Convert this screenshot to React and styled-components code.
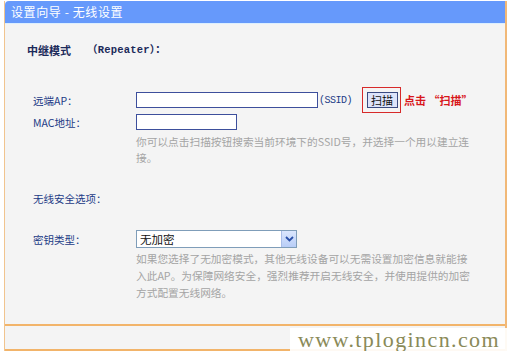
import React from 'react'
import styled, { createGlobalStyle } from 'styled-components'

const GlobalStyle = createGlobalStyle`
  body {
    margin: 0;
    background: #ffffff;
    font-family: "Noto Sans CJK SC", "Liberation Sans", sans-serif;
  }
`

const Page = styled.div`
  position: relative;
  width: 510px;
  height: 351px;
  padding-top: 1px;
  box-sizing: border-box;
  overflow: hidden;
`

const Frame = styled.div`
  margin-left: 4px;
  width: 503px;
  border-left: 1px solid #f1c48e;
  border-right: 2px solid #f1b877;
  box-sizing: border-box;
`

const Header = styled.div`
  height: 22px;
  background: #6699fb;
  border-top-left-radius: 4px;
  border-bottom: 1px solid #dcefff;
  color: #ffffff;
  font-size: 12px;
  letter-spacing: 0.6px;
  line-height: 22px;
  padding-left: 6px;
  white-space: pre;
`

const Content = styled.div`
  height: 302px;
  background: #f4f4f4;
  border-bottom: 2px solid #f2b46a;
  padding: 18px 0 0 22px;
  box-sizing: border-box;
`

const Title = styled.div`
  height: 16px;
  line-height: 16px;
  font-size: 11px;
  color: #1b2a5a;
  font-weight: 700;
  display: flex;
  gap: 16px;
`

const Mode = styled.span`
  font-family: "Liberation Mono", "Noto Sans CJK SC", monospace;
  font-size: 10.5px;
  letter-spacing: 0.2px;
`

const Row = styled.div`
  display: grid;
  grid-template-columns: 109px 1fr;
  align-items: center;
  height: ${p => p.$h}px;
  margin-top: ${p => p.$mt}px;
`

const Label = styled.div`
  padding-left: 6px;
  font-size: 10.5px;
  color: #1c3b86;
`

const Field = styled.div`
  display: flex;
  align-items: center;
`

const TextInput = styled.div`
  width: ${p => p.$w}px;
  height: 16px;
  background: #ffffff;
  border: 1px solid #3d4f9c;
  box-sizing: border-box;
`

const Unit = styled.span`
  font-family: "Liberation Mono", monospace;
  font-size: 10px;
  color: #1c3b86;
  margin-left: 1px;
  letter-spacing: -0.5px;
`

const ScanBox = styled.div`
  margin-left: 10px;
  width: 39px;
  height: 26px;
  border: 1px solid #d72a2a;
  box-sizing: border-box;
  display: flex;
  align-items: center;
  justify-content: center;
  padding-left: 1px;
`

const ScanButton = styled.div`
  width: 31px;
  height: 16px;
  background: #dde4fa;
  border: 1px solid #3a4a80;
  box-sizing: border-box;
  font-size: 11px;
  line-height: 14px;
  text-align: center;
  color: #111111;
`

const Hint = styled.span`
  margin-left: 3px;
  font-size: 11px;
  font-weight: 700;
  color: #d8161b;
`

const Help = styled.div`
  margin-left: 109px;
  margin-top: ${p => p.$mt}px;
  font-size: 10.7px;
  line-height: ${p => p.$lh}px;
  color: #a4a4a4;
  white-space: nowrap;
`

const Select = styled.div`
  width: 161px;
  height: 18px;
  background: #ffffff;
  border: 1px solid #7f9db9;
  box-sizing: border-box;
  display: flex;
  align-items: center;
  justify-content: space-between;
  font-size: 11.5px;
  color: #111111;
  padding-left: 3px;
`

const Arrow = styled.div`
  width: 15px;
  height: 16px;
  background: linear-gradient(#dbe6fd, #b8cdf7);
  border-left: 1px solid #a9bde8;
  box-sizing: border-box;
  display: flex;
  align-items: center;
  justify-content: center;
`

const Footer = styled.div`
  height: 23px;
  background: #f4f4f4;
  border-bottom: 2px solid #f2b46a;
`

const Watermark = styled.div`
  position: absolute;
  left: 290px;
  top: 328px;
  width: 220px;
  height: 23px;
  background: rgba(255, 255, 255, 0.92);
  font-family: "Liberation Serif", "DejaVu Serif", serif;
  font-size: 22px;
  letter-spacing: 1.4px;
  line-height: 24px;
  color: #8a8a58;
  padding-left: 8px;
  box-sizing: border-box;
  white-space: nowrap;
`

export default function App() {
  return (
    <Page>
      <GlobalStyle />
      <Frame>
        <Header>设置向导 - 无线设置</Header>
        <Content>
          <Title>
            <span>中继模式</span>
            <Mode>（Repeater）：</Mode>
          </Title>
          <Row $h={26} $mt={29}>
            <Label>远端AP：</Label>
            <Field>
              <TextInput $w={182} />
              <Unit>(SSID)</Unit>
              <ScanBox>
                <ScanButton>扫描</ScanButton>
              </ScanBox>
              <Hint>点击 “扫描”</Hint>
            </Field>
          </Row>
          <Row $h={16} $mt={1}>
            <Label>MAC地址：</Label>
            <Field>
              <TextInput $w={101} />
            </Field>
          </Row>
          <Help $mt={4} $lh={16}>
            你可以点击扫描按钮搜索当前环境下的SSID号，并选择一个用以建立连
            <br />
            接。
          </Help>
          <Row $h={16} $mt={24}>
            <Label>无线安全选项：</Label>
          </Row>
          <Row $h={18} $mt={24}>
            <Label>密钥类型：</Label>
            <Field>
              <Select>
                无加密
                <Arrow>
                  <svg width="9" height="6" viewBox="0 0 9 6">
                    <path d="M1 1 L4.5 4.5 L8 1" fill="none" stroke="#2a4fa8" strokeWidth="1.8" />
                  </svg>
                </Arrow>
              </Select>
            </Field>
          </Row>
          <Help $mt={2} $lh={17}>
            如果您选择了无加密模式，其他无线设备可以无需设置加密信息就能接
            <br />
            入此AP。为保障网络安全，强烈推荐开启无线安全，并使用提供的加密
            <br />
            方式配置无线网络。
          </Help>
        </Content>
        <Footer />
      </Frame>
      <Watermark>www.tplogincn.com</Watermark>
    </Page>
  )
}
